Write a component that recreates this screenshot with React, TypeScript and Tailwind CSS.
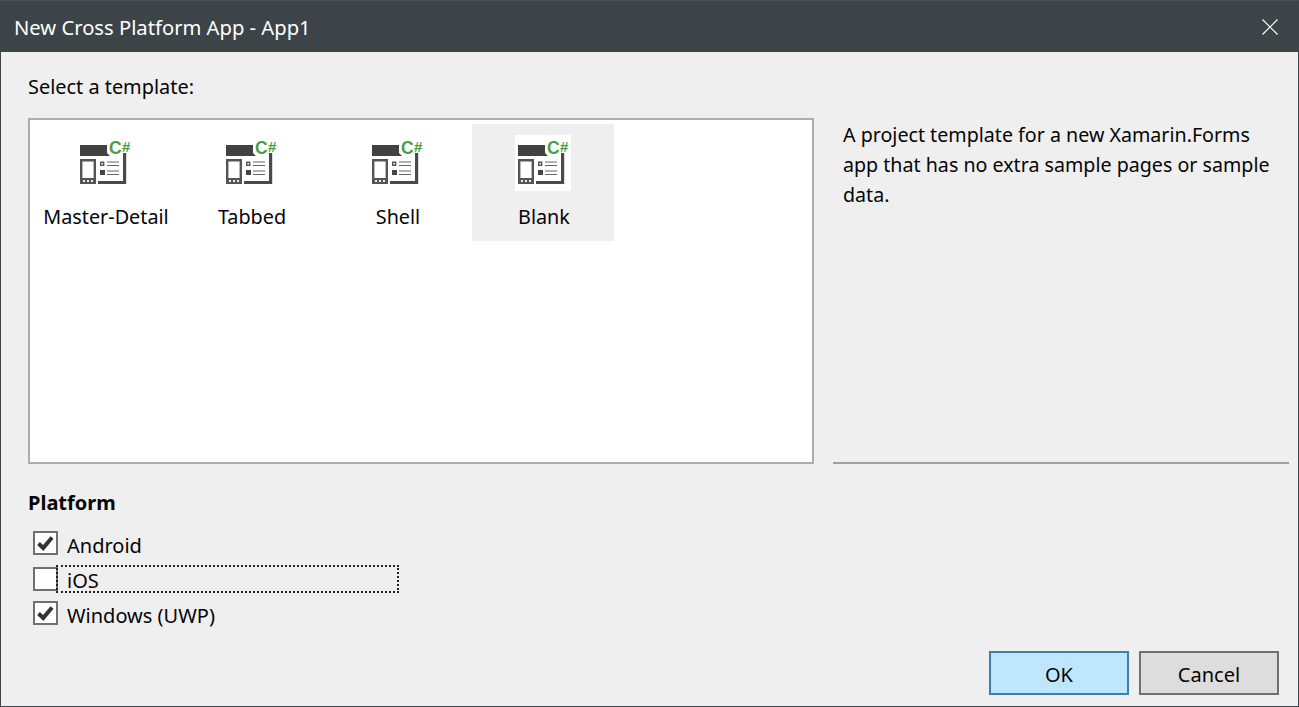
import React from "react";

function TemplateIcon({ boxed }: { boxed?: boolean }) {
  return (
    <svg width="56" height="56" viewBox="0 0 56 56" className={boxed ? "bg-white" : ""}>
      <g className="blur-[0.3px]" transform="translate(1 0)">
        <path d="M2 10h27v8l3 3H2z" fill="#424242" />
        <path d="M3.2 25.2h13.6v22.6H3.2z" fill="none" stroke="#555" strokeWidth="2.4" />
        <path d="M2 43h16v6H2z" fill="#555" />
        <path d="M5 45h2v2H5zM9 45h2v2H9zM13 45h2v2h-2z" fill="#eee" />
        <path d="M45 18h3.2v31H20v-3h25z" fill="#4a4a4a" />
        <path d="M22.7 27.2h3v3h-3z" fill="none" stroke="#555" strokeWidth="1.4" />
        <path d="M22 35h5v5h-5z" fill="#444" />
        <path d="M29 27h12M29 30.5h12M29 36h12M29 39.5h12" stroke="#666" strokeWidth="1.2" />
      </g>
      <text x="32" y="18.5" fontFamily="'Liberation Sans', sans-serif" fontWeight="700" fontSize="17.5" fill="#459f45">C</text>
      <text x="45" y="16.5" fontFamily="'Liberation Sans', sans-serif" fontWeight="700" fontSize="15" fill="#459f45">#</text>
    </svg>
  );
}

function Tile({ label, selected }: { label: string; selected?: boolean }) {
  return (
    <div className={`w-[142px] h-[117px] flex flex-col items-center pt-[11px] ${selected ? "bg-[#efefef]" : ""}`}>
      <TemplateIcon boxed={selected} />
      <span className="mt-[13px] ml-[2px] text-[19.8px] leading-[26px] whitespace-nowrap">{label}</span>
    </div>
  );
}

function Check({ checked }: { checked?: boolean }) {
  return (
    <span className="w-[25px] h-[24px] shrink-0 border-2 border-[#707070] bg-white flex items-center justify-center">
      {checked && (
        <svg width="17" height="15" viewBox="0 0 17 15">
          <path d="M1.5 7.5 L6.2 12 L15 1.5" fill="none" stroke="#333" strokeWidth="4" />
        </svg>
      )}
    </span>
  );
}

export default function App() {
  return (
    <div
      className="w-[1299px] h-[707px] flex flex-col border-x border-b border-[#3e464a] bg-[#efefef] text-[#050505] text-[20px] overflow-hidden"
      style={{ fontFamily: "'Noto Sans', sans-serif" }}
    >
      <div className="h-[52px] shrink-0 -mx-px px-[14px] bg-[#3c4448] border-t border-[#4a5256] flex items-center justify-between text-white">
        <span className="text-[20.2px] leading-[26px] mt-[1px]">New Cross Platform App - App1</span>
        <svg width="16" height="16" viewBox="0 0 16 16" className="mr-[7px]">
          <path d="M0.5 0.5 L15.5 15.5 M15.5 0.5 L0.5 15.5" stroke="#fff" strokeWidth="1.2" />
        </svg>
      </div>

      <div className="flex-1 flex flex-col pl-[28px] pr-[9px]">
        <div className="h-[26px] mt-[22px] -ml-[1px] text-[19.9px] leading-[26px]">Select a template:</div>

        <div className="flex mt-[18px] h-[347px]">
          <div className="w-[786px] -ml-[1px] h-[346px] border-2 border-[#abadb3] bg-white pl-[4px] pt-[4px] flex gap-[4px]">
            <Tile label="Master-Detail" />
            <Tile label="Tabbed" />
            <Tile label="Shell" />
            <Tile label="Blank" selected />
          </div>
          <div className="ml-[19px] flex-1 border-b-2 border-[#a0a0a0] h-[346px] pl-[10px] pt-[2px] text-[19.65px] leading-[30px]">
            <p className="w-[440px]">
              A project template for a new Xamarin.Forms app that has no extra sample pages or sample data.
            </p>
          </div>
        </div>

        <div className="mt-[25px] -ml-[1px] font-bold leading-[26px]">Platform</div>

        <div className="mt-[15px] ml-[4px] flex flex-col">
          <label className="h-[35px] flex items-start gap-[9px]">
            <Check checked />
            <span className="pt-[2px] leading-[26px]">Android</span>
          </label>
          <label className="h-[35px] flex items-start">
            <span className="mt-[1px] flex"><Check /></span>
            <span className="relative -ml-[2px] -mt-[1px] w-[343px] h-[28px] border-2 border-dotted border-[#222] pl-[9px] pt-[1px] leading-[26px]">iOS</span>
          </label>
          <label className="h-[35px] flex items-start gap-[9px]">
            <Check checked />
            <span className="pt-[2px] leading-[26px]">Windows (UWP)</span>
          </label>
        </div>

        <div className="mt-auto mb-[11px] pr-[10px] flex justify-end gap-[10px]">
          <button className="w-[140px] h-[44px] pt-[3px] border-2 border-[#3c7fb1] bg-[#bee6fd]">OK</button>
          <button className="w-[140px] h-[44px] pt-[3px] border-2 border-[#707070] bg-[#dddddd]">Cancel</button>
        </div>
      </div>
    </div>
  );
}
